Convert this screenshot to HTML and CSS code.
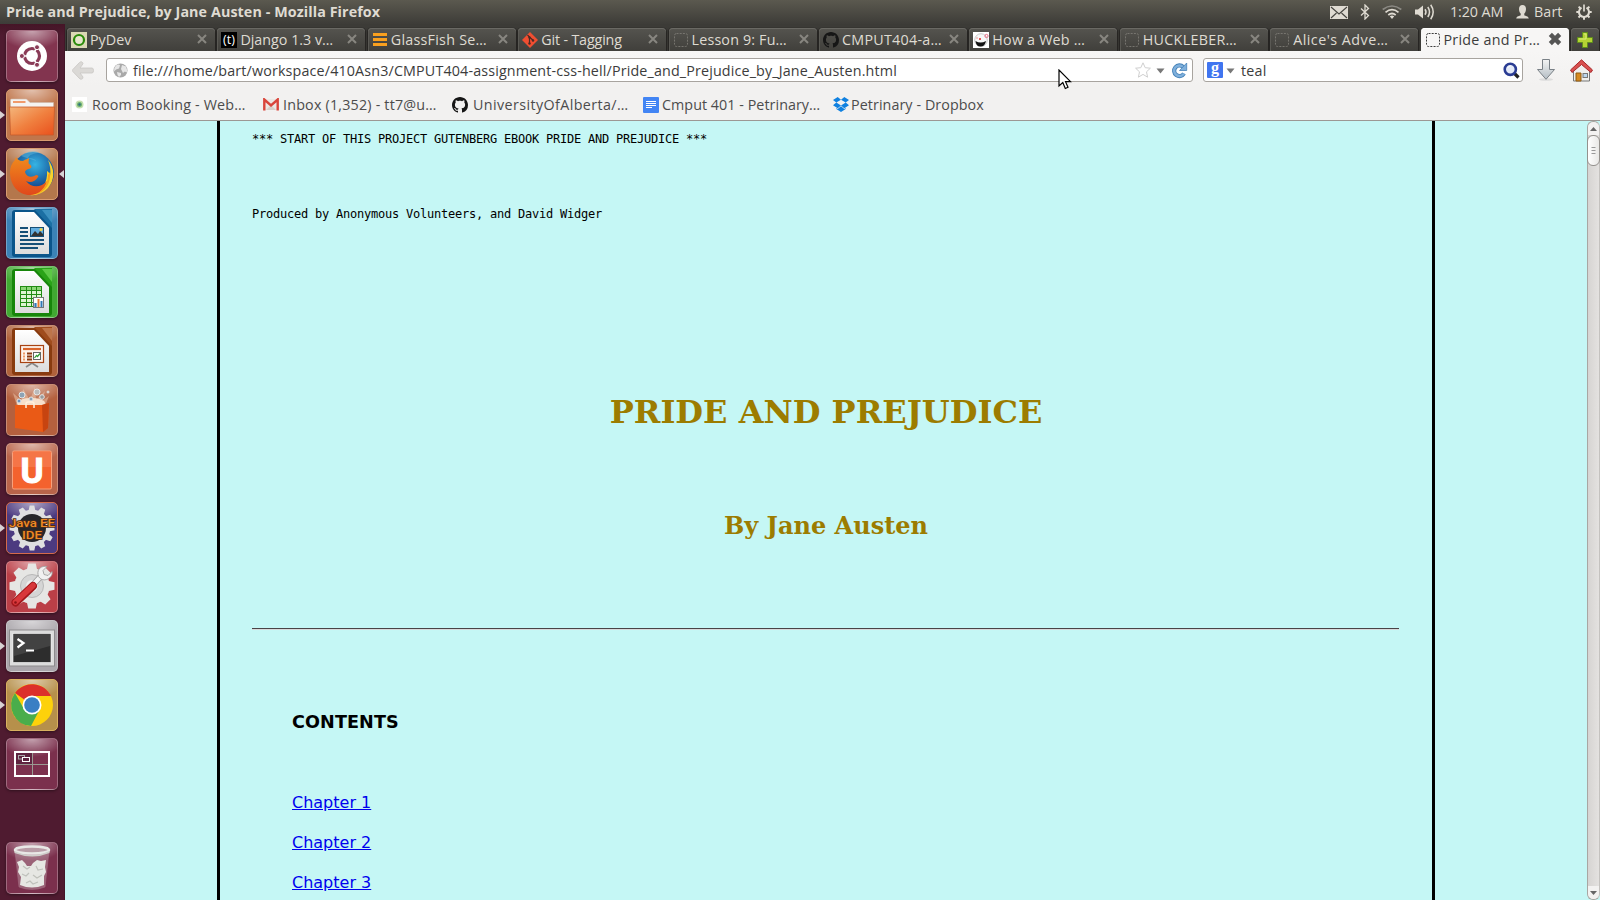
FILE: index.html
```html
<!DOCTYPE html>
<html lang="en">
<head>
<meta charset="utf-8">
<title>Pride and Prejudice, by Jane Austen</title>
<link rel="stylesheet" href="styles.css">
</head>
<body>
<svg class="defs" width="0" height="0">
  <defs>
    <linearGradient id="folder" x1="0" y1="0" x2="1" y2="1"><stop offset="0" stop-color="#f4b67c"/><stop offset=".5" stop-color="#f0803f"/><stop offset="1" stop-color="#e9501c"/></linearGradient>
    <radialGradient id="globe" cx=".55" cy=".3" r=".6"><stop offset="0" stop-color="#35b4e4"/><stop offset="1" stop-color="#123f86"/></radialGradient>
    <linearGradient id="fox" x1="0" y1="0" x2="0" y2="1"><stop offset="0" stop-color="#f08a1d"/><stop offset="1" stop-color="#e0481b"/></linearGradient>
    <linearGradient id="paper" x1="0" y1="0" x2="0" y2="1"><stop offset="0" stop-color="#fff"/><stop offset="1" stop-color="#dcdcdc"/></linearGradient>
    <linearGradient id="steel" x1="0" y1="0" x2="0" y2="1"><stop offset="0" stop-color="#f4f5f5"/><stop offset="1" stop-color="#b4bdc4"/></linearGradient>
    <symbol id="x" viewBox="0 0 12 12"><path d="M2 2l8 8M10 2l-8 8" stroke="#888680" stroke-width="2"/></symbol>
    <symbol id="blank" viewBox="0 0 16 16"><rect x="1.5" y="1.5" width="13" height="13" rx="2" fill="none" stroke="currentColor" stroke-dasharray="2 1.2"/></symbol>
    <symbol id="octo" viewBox="0 0 16 16"><path fill="currentColor" fill-rule="evenodd" d="M8 0C3.58 0 0 3.58 0 8c0 3.54 2.29 6.53 5.47 7.59.4.07.55-.17.55-.38 0-.19-.01-.82-.01-1.49-2.01.37-2.53-.49-2.69-.94-.09-.23-.48-.94-.82-1.13-.28-.15-.68-.52-.01-.53.63-.01 1.08.58 1.23.82.72 1.21 1.87.87 2.33.66.07-.52.28-.87.51-1.07-1.78-.2-3.64-.89-3.64-3.95 0-.87.31-1.59.82-2.15-.08-.2-.36-1.02.08-2.12 0 0 .67-.21 2.2.82.64-.18 1.32-.27 2-.27s1.36.09 2 .27c1.53-1.04 2.2-.82 2.2-.82.44 1.1.16 1.92.08 2.12.51.56.82 1.27.82 2.15 0 3.07-1.87 3.75-3.65 3.95.29.25.54.73.54 1.48 0 1.07-.01 1.93-.01 2.2 0 .21.15.46.55.38A8.01 8.01 0 0 0 16 8c0-4.42-3.58-8-8-8z"/></symbol>
    <symbol id="down" viewBox="0 0 9 6"><path d="M.5.5h8L4.500 5.500z" fill="#777"/></symbol>
    <symbol id="gear" viewBox="-22 -22 44 44"><g fill="#e6e6e4"><path id="bar" d="M-4.800-16L-3.600-21.500h7.200L4.800-16V16L3.600 21.500h-7.200L-4.800 16z"/><use href="#bar" transform="rotate(45)"/><use href="#bar" transform="rotate(90)"/><use href="#bar" transform="rotate(135)"/><circle r="17"/></g></symbol>
    <symbol id="gear12" viewBox="-22 -22 44 44"><g fill="#dfdfe0"><path id="tooth" d="M-3.200-17L-2.200-21.500h4.400L3.200-17V17L2.200 21.500h-4.400L-3.200 17z"/><use href="#tooth" transform="rotate(30)"/><use href="#tooth" transform="rotate(60)"/><use href="#tooth" transform="rotate(90)"/><use href="#tooth" transform="rotate(120)"/><use href="#tooth" transform="rotate(150)"/><circle r="17.500"/></g></symbol>
  </defs>
</svg>

<header class="panel">
  <h1 class="window-title">Pride and Prejudice, by Jane Austen - Mozilla Firefox</h1>
  <div class="indicators">
    <svg class="i-mail" width="18" height="13" viewBox="0 0 18 13"><rect width="18" height="13" fill="#dfdbd2"/><path d="M1 1l8 7 8-7M1 12l5.500-5M17 12l-5.500-5" fill="none" stroke="#45443f" stroke-width="1.100"/></svg>
    <svg class="i-bt" width="10" height="16" viewBox="0 0 10 16"><path d="M1 4.500l7.500 7L5 15V1l3.500 3.500L1 11.500" fill="none" stroke="#dfdbd2" stroke-width="1.300"/></svg>
    <svg class="i-wifi" width="20" height="14" viewBox="0 0 20 14"><g fill="none" stroke="#dfdbd2" stroke-width="1.700"><path d="M.7 4.500Q10-2.500 19.300 4.500" stroke="#8b8983"/><path d="M3.500 7.300Q10 2 16.500 7.300"/><path d="M6.300 10Q10 7 13.700 10"/></g><path d="M7.800 11.300Q10 9.700 12.200 11.300L10 14z" fill="#dfdbd2"/></svg>
    <svg class="i-vol" width="20" height="16" viewBox="0 0 20 16"><path d="M0 5.500h3L8 1.500v13L3 10.500H0z" fill="#dfdbd2"/><g fill="none" stroke="#dfdbd2" stroke-width="1.500"><path d="M10 5.200q2 2.800 0 5.600"/><path d="M12.800 3q3.400 5 0 10"/><path d="M15.700.8q5 7.200 0 14.400"/></g></svg>
    <span class="clock">1:20 AM</span>
    <svg class="i-user" width="13" height="14" viewBox="0 0 13 14"><path d="M6.500 0C9 0 10 1.700 10 4S9 8 8.300 8.600v1.600c1 .8 4 .8 4.500 3.300H.2C.7 11 3.700 11 4.700 10.200V8.600C4 8 3 6.300 3 4S4 0 6.500 0z" fill="#dfdbd2"/></svg>
    <span class="user">Bart</span>
    <svg class="i-power" width="16" height="16" viewBox="-8 -8 16 16"><g stroke="#dfdbd2" fill="none"><path d="M-2.500-4.300A5 5 0 1 0 2.500-4.300" stroke-width="2"/><path d="M0-7.500V-.5" stroke-width="1.700"/><path d="M5 0h2.700M-5 0h-2.700M0 5v2.700M3.500 3.500l2 2M-3.500 3.500l-2 2M3.700-3.700l1.700-1.700M-3.700-3.700l-1.700-1.700" stroke-width="2"/></g></svg>
  </div>
</header>

<div class="desktop">
<nav class="launcher">
  <div class="tile t-dash"><svg viewBox="0 0 52 52"><circle cx="26" cy="26" r="15" fill="#fff"/><circle cx="26" cy="26" r="7.500" fill="none" stroke="#8a3b57" stroke-width="3.200"/><g stroke="#fff" stroke-width="1.500"><path d="M26 26l-11 0M26 26l5.500-9.500M26 26l5.500 9.500"/></g><circle cx="26" cy="26" r="5.200" fill="#fff"/><g fill="#8a3b57" stroke="#fff"><circle cx="15.900" cy="26" r="2.500"/><circle cx="31" cy="17.200" r="2.500"/><circle cx="31" cy="34.800" r="2.500"/></g></svg></div>
  <div class="tile t-files running"><svg viewBox="0 0 52 52"><path d="M4.500 11q0-1 1-1h15l3.500 3.500h23.500V20h-43z" fill="#f5f3f1" stroke="#cdb8aa" stroke-width=".6"/><path d="M7 12h12.500v2H7z" fill="#f09a6b"/><path d="M3.500 18h45l-1 28H4.500z" fill="url(#folder)" stroke="#c65c2b" stroke-width=".8"/></svg></div>
  <div class="tile t-firefox running focused"><svg viewBox="0 0 52 52"><circle cx="27" cy="25" r="21" fill="url(#globe)"/><path d="M15 8c5-5 14-6 19-3-6 0-11 2-12 5 6 0 8 2 8 3z" fill="#5bb9df" opacity=".5"/><path d="M42 12c7 8 7 20 0 28-5 5-12 8-18 7 12-3 18-13 17-24 2 1 3 3 3 5 1-6 0-11-2-16z" fill="#f8d32c"/><path d="M4 24c0-5 2-9 5-12l1-3c1 2 3 4 7 4 3-2 5-2 6-3 0 3-1 5 0 6 2 1 3 2 2 4-2 1-5 1-6 4 1 5 7 6 11 3 2 0 3 1 2 2-3 5-8 6-12 4 5 7 15 7 21 0-2 9-9 14-17 14C12 47 4 37 4 24z" fill="url(#fox)"/><path d="M44 24c1 10-4 20-15 23 9-5 13-12 13-20z" fill="#f6a21d"/></svg></div>
  <div class="tile t-writer"><svg viewBox="0 0 52 52"><rect x="6" y="3" width="40" height="47" rx="3" fill="#0b558a"/><path d="M28 2h18v19z" fill="#1b6fa3"/><path d="M36 3h10v13z" fill="#3c91c0"/><path d="M9 5h19l15 16v26H9z" fill="url(#paper)"/><path d="M14 21h8M14 25h8M14 29h8M14 33h24M14 37h24M14 41h18" stroke="#164f77" stroke-width="1.800"/><rect x="24.500" y="20.500" width="13" height="9" fill="#63aee0" stroke="#164f77"/><path d="M25 29l4-5 3 3 2-3 3 3v2z" fill="#333"/><circle cx="35" cy="22.500" r="1.500" fill="#f5d443"/></svg></div>
  <div class="tile t-calc"><svg viewBox="0 0 52 52"><rect x="6" y="3" width="40" height="47" rx="3" fill="#17860a"/><path d="M28 2h18v19z" fill="#2aa318"/><path d="M36 3h10v13z" fill="#5cc845"/><path d="M9 5h19l15 16v26H9z" fill="url(#paper)"/><rect x="14.500" y="20.500" width="21" height="20" fill="#dff5d2" stroke="#238c14"/><path d="M15 21h20v4H15z" fill="#8dd777"/><path d="M14 24.500h22M14 28.500h22M14 32.500h22M14 36.500h22M20.500 20v21M25.500 20v21M30.500 20v21" stroke="#238c14"/><rect x="27.500" y="31.500" width="10" height="10" fill="#fff" stroke="#777"/><path d="M29.500 41v-4" stroke="#3179b5" stroke-width="2.200"/><path d="M32.500 41v-8" stroke="#ea7a2c" stroke-width="2"/><path d="M35.500 41v-6" stroke="#3179b5" stroke-width="2"/></svg></div>
  <div class="tile t-impress"><svg viewBox="0 0 52 52"><rect x="6" y="3" width="40" height="47" rx="3" fill="#883b0f"/><path d="M28 2h18v19z" fill="#9f4c1d"/><path d="M36 3h10v13z" fill="#bd754a"/><path d="M9 5h19l15 16v26H9z" fill="url(#paper)"/><path d="M26 36v3M20 42l6-4 6 4" fill="none" stroke="#888" stroke-width="1.800"/><rect x="14.500" y="20.500" width="23" height="17" fill="#fdf3ec" stroke="#a84313" stroke-width="1.200"/><path d="M17 24h18" stroke="#d9642a" stroke-width="2.200"/><path d="M17 28.500h2M17 31.500h2M17 34.500h2" stroke="#ee9a66" stroke-width="1.800"/><path d="M21 28.500h5M21 31.500h5M21 34.500h5" stroke="#8d3a11" stroke-width="1.800"/><rect x="27.500" y="27.500" width="7" height="7" fill="#fff" stroke="#666"/><path d="M28.500 33l2-2.500 1 1 2.500-3" fill="none" stroke="#2f9b34" stroke-width="1.200"/></svg></div>
  <div class="tile t-software"><svg viewBox="0 0 52 52"><path d="M11 22L7 9l9 8 1-12 7 11 5-13 1 13 9-9-3 10 7-5-4 10z" fill="#ffe3c8" opacity=".4"/><ellipse cx="25" cy="19" rx="14" ry="5" fill="#fff1e0" opacity=".8"/><g fill="#8da3b5" stroke="#e4e5e6"><circle cx="16" cy="11" r="3"/><circle cx="25" cy="15" r="2"/><circle cx="31" cy="8" r="3" fill="#bbb"/><circle cx="36" cy="13" r="2.300" fill="#999"/><circle cx="13" cy="17" r="2" fill="#6c94be"/><circle cx="42" cy="8" r="1" fill="#bbb"/></g><path d="M9 21h27l7-2-1 25-5 4-28-4z" fill="#ea5a16"/><path d="M36 21l7-2-1 25-5 4z" fill="#c74410"/><path d="M20 24v-4q0-2 2-2h4q2 0 2 2v4" fill="none" stroke="#fff0dc" stroke-width="1.500"/></svg></div>
  <div class="tile t-one"><svg viewBox="0 0 52 52"><rect x="6.500" y="8" width="39" height="38" rx="1.500" fill="#f4622e" stroke="#f8a07b"/><path d="M7 9h38v15H7z" fill="#fff" opacity=".12"/><text x="26" y="39.500" text-anchor="middle" font-size="35" font-weight="700" font-family="Roboto, sans-serif" fill="#fff" stroke="#fff">U</text></svg></div>
  <div class="tile t-java running"><svg viewBox="0 0 52 52"><use href="#gear12" x="3" y="3" width="46" height="46"/><circle cx="26" cy="26" r="14" fill="#26262a"/><g text-anchor="middle" font-family="Roboto, sans-serif" font-weight="500"><text x="26" y="24.500" font-size="11.500" textLength="46" lengthAdjust="spacingAndGlyphs" class="java">Java EE</text><text x="26" y="37" font-size="11.500" textLength="20" lengthAdjust="spacingAndGlyphs" class="java">IDE</text></g></svg></div>
  <div class="tile t-settings"><svg viewBox="0 0 52 52"><use href="#gear" x="3" y="2" width="46" height="46"/><circle cx="26" cy="25" r="11.500" fill="#d5d5d5" stroke="#b8b8b8"/><circle cx="26" cy="25" r="6" fill="#eee"/><path d="M26 25L36 14" stroke="#999" stroke-width="6"/><path d="M26 25L36 14" stroke="#f2f2f2" stroke-width="4.500"/><path d="M41 5.500c-5-1-10 2-9 8s8 7 12 3c2-2 2.500-4 2-6l-4 4-4-1-1-4z" fill="#f1f1f1" stroke="#999" stroke-width=".8"/><path d="M9.500 41.500L27 25" stroke="#a3171b" stroke-width="8" stroke-linecap="round"/><path d="M9.500 41L27 24.500" stroke="#d8383b" stroke-width="5.500" stroke-linecap="round"/><circle cx="9.500" cy="41.500" r="1.300" fill="#8c1115"/></svg></div>
  <div class="tile t-term running"><svg viewBox="0 0 52 52"><rect x="3.500" y="10" width="45" height="36" fill="#dcdcdc" stroke="#8d8b8d"/><rect x="7" y="13.500" width="38" height="29" fill="#2d2d2d" stroke="#fff" stroke-width=".6"/><path d="M8 14h36v12L8 36z" fill="#fff" opacity=".1"/><path d="M11.500 19l6 4-6 4.500" fill="none" stroke="#fff" stroke-width="2.200"/><path d="M20 30.500h8" stroke="#fff" stroke-width="2"/></svg></div>
  <div class="tile t-chrome running"><svg viewBox="0 0 52 52"><circle cx="26" cy="26" r="21" fill="#fdd10b"/><path d="M26 26L26 17H45A21 21 0 0 0 9 14z" fill="#dc2f2b"/><path d="M9 14A21 21 0 0 0 25 47L34 30 18.500 31z" fill="#4aad4b"/><circle cx="26" cy="26" r="9.500" fill="#fff"/><circle cx="26" cy="26" r="7.800" fill="#3a7fc4"/></svg></div>
  <div class="tile t-work"><svg viewBox="0 0 52 52"><path d="M9 14h17v12H9z" fill="#5f2440"/><path d="M26.500 14v24M9 26.500h34" stroke="#9a9a92"/><rect x="9" y="14" width="34" height="24" fill="none" stroke="#fff" stroke-width="2"/><rect x="12.500" y="17.500" width="6" height="3.500" fill="none" stroke="#aaa"/><rect x="16.500" y="19.500" width="7" height="4" fill="#5f2440" stroke="#fff"/></svg></div>
  <div class="tile t-trash"><svg viewBox="0 0 52 52"><path d="M9 9h34l-4 36q-13 5-26 0z" fill="#c9aeb6" opacity=".4" stroke="#d9c5cb" stroke-width=".6"/><path d="M11 20l5-2 3 3 2 3 4 0 2-3 4-3 4 1 5-1-1 7 1 5-2 4v9q-12 5-24 0l1-8-3-5 1-5z" fill="#e6e7e3"/><path d="M17 24l4 3 3-2M30 24l2 4 5-1M16 32l4 2 3-3M27 33l4 3 5-3M20 41l4-2 3 3 5-2" fill="none" stroke="#bfc1bb" stroke-width="1.200"/><ellipse cx="26" cy="8" rx="17" ry="3.500" fill="#b99da7" stroke="#e8e8e6" stroke-width="2.500"/><path d="M8.500 9q17 8 35 0v2q-17 7-35 0z" fill="#cfcfcb"/></svg></div>
</nav>

<main class="browser">
  <div class="tabs">
    <div class="tab"><svg class="fav" viewBox="0 0 16 16"><path fill="#dcd8b4" d="M0 0h16v16H0z"/><circle cx="8" cy="8" r="5" fill="#e8e5cc" stroke="#2b8a09" stroke-width="2.200"/></svg><span class="label k1">PyDev</span><svg class="close"><use href="#x"/></svg></div>
    <div class="tab"><svg class="fav" viewBox="0 0 16 16"><path d="M0 0h16v16H0z"/><text x="8" y="12" text-anchor="middle" font-size="12.500" font-family="Open Sans, sans-serif" fill="#fff">(t)</text></svg><span class="label k2">Django 1.3 v…</span><svg class="close"><use href="#x"/></svg></div>
    <div class="tab"><svg class="fav" viewBox="0 0 16 16"><path d="M1 1h14v3H1zM1 6h14v3H1zM1 11h14v3H1z" fill="#f9a01f"/></svg><span class="label k3">GlassFish Se…</span><svg class="close"><use href="#x"/></svg></div>
    <div class="tab"><svg class="fav" viewBox="0 0 16 16"><path d="M8 0l8 8-8 8-8-8z" fill="#f04e31"/><path d="M5.500 3l2 2v6.500M8 5.500l3 2.800" stroke="#4a2a24" stroke-width="1.200" fill="none"/><circle cx="7.500" cy="5.500" r="1.200" fill="#4a2a24"/><circle cx="7.500" cy="11.500" r="1.200" fill="#4a2a24"/><circle cx="11" cy="8.500" r="1.200" fill="#4a2a24"/></svg><span class="label k4">Git - Tagging</span><svg class="close"><use href="#x"/></svg></div>
    <div class="tab"><svg class="fav dim"><use href="#blank"/></svg><span class="label k5">Lesson 9: Fu…</span><svg class="close"><use href="#x"/></svg></div>
    <div class="tab"><svg class="fav black"><use href="#octo"/></svg><span class="label k6">CMPUT404-a…</span><svg class="close"><use href="#x"/></svg></div>
    <div class="tab"><svg class="fav" viewBox="0 0 16 16"><path fill="#fff" d="M0 0h16v16H0z"/><circle cx="8" cy="8" r="6.300" fill="#f8f8f8" stroke="#bbb" stroke-width=".8"/><path d="M2.500 9q5 3 10.500 0-1 5.500-5.500 5.500T2.500 9z" fill="#111"/><circle cx="7" cy="7" r="1" fill="#d22"/><circle cx="13.500" cy="4" r="1.600" fill="none" stroke="#e66a82"/><circle cx="4" cy="6" r=".8" fill="#e88"/></svg><span class="label k7">How a Web …</span><svg class="close"><use href="#x"/></svg></div>
    <div class="tab"><svg class="fav dim"><use href="#blank"/></svg><span class="label k8">HUCKLEBER…</span><svg class="close"><use href="#x"/></svg></div>
    <div class="tab"><svg class="fav dim"><use href="#blank"/></svg><span class="label k9">Alice's Adve…</span><svg class="close"><use href="#x"/></svg></div>
    <div class="tab active"><svg class="fav"><use href="#blank"/></svg><span class="label k10">Pride and Pr…</span><svg class="close" viewBox="0 0 12 12"><path d="M2 2l8 8M10 2l-8 8" stroke="#555" stroke-width="3.800"/></svg></div>
    <div class="tab new"><svg width="16" height="16" viewBox="0 0 16 16"><path d="M5.500.5h5v5h5v5h-5v5h-5v-5h-5v-5h5z" fill="#b5d334" stroke="#5f8f1c"/><path d="M7 2h2v5H2" fill="none" stroke="#d9ec7c"/></svg></div>
  </div>

  <div class="toolbar">
    <svg class="back" width="22" height="19" viewBox="0 0 22 19"><path d="M9.500.8q1.500.5 1.500 2L8 7h12q1.500 0 1.500 2.500T20 12H8l3 4q0 2-1.500 2.200Q8 18.500 7 17L.8 10.500q-.6-1 0-2L7.500 1.500Q8.500.5 9.500.8z" fill="#dbd9d6" stroke="#c9c7c4" stroke-width=".8"/></svg>
    <div class="field url">
      <svg width="15" height="15" viewBox="0 0 15 15"><circle cx="7.500" cy="7.500" r="7" fill="#a9a9a9"/><path d="M3 2.500q3-2 4 0l-1 3-3 1-2 2Q.5 5 3 2.500zM9 2l4 1.500q1.500 3 .8 6l-2-1L10 10 8 6zM4 9l4 1v2l-2 2q-2-2-2-5z" fill="#e6e6e6"/></svg>
      <span class="address">file:///home/bart/workspace/410Asn3/CMPUT404-assignment-css-hell/Pride_and_Prejudice_by_Jane_Austen.html</span>
      <svg class="star" width="16" height="16" viewBox="0 0 16 16"><path d="M8 .8l2.200 4.900 5.200.5-3.900 3.600 1.100 5.400L8 12.400l-4.600 2.800 1.100-5.400L.6 6.200l5.200-.5z" fill="#fff" stroke="#cfcfcf"/></svg>
      <svg class="drop" width="9" height="6"><use href="#down"/></svg>
      <svg class="reload" width="17" height="17" viewBox="0 0 17 17"><path d="M12.200 5A5.300 5.300 0 1 0 13 11.500" fill="none" stroke="#4682b8" stroke-width="4.200"/><path d="M12.200 5A5.300 5.300 0 1 0 13 11.500" fill="none" stroke="#7fb0dc" stroke-width="2.400"/><path d="M15.700 1v7.500H8.500z" fill="#7fb0dc" stroke="#4682b8" stroke-width=".8"/></svg>
    </div>
    <div class="field search">
      <span class="engine">g</span>
      <svg class="drop2" width="9" height="6"><use href="#down"/></svg>
      <span class="query">teal</span>
      <svg class="lens" width="17" height="17" viewBox="0 0 17 17"><path d="M11 11l4.500 4.500" stroke="#222" stroke-width="3.200"/><circle cx="7.300" cy="7.300" r="5.600" fill="#e4eaf8" stroke="#2a3c93" stroke-width="2.600"/><path d="M4.500 6q1-2 3-2" stroke="#fff" fill="none"/></svg>
    </div>
    <svg class="dl" width="18" height="22" viewBox="0 0 18 22"><ellipse cx="9" cy="20.500" rx="7" ry="1.300" fill="#ddd"/><path d="M5.500.5h7v10h5L9 20.300.5 10.500h5z" fill="url(#steel)" stroke="#7a8187"/></svg>
    <svg class="home" width="23" height="23" viewBox="0 0 23 23"><path d="M3.500 10L11.500 4l8 6v12h-16z" fill="#f0efed" stroke="#777"/><path d="M6 14h5v8H6z" fill="#d58a20" stroke="#8f5a12"/><rect x="13" y="14.500" width="4.500" height="4" fill="#bcd6ec" stroke="#777"/><path d="M11.500.8L22.500 11l-1.500 2.500-9.500-8-9.500 8L.5 11z" fill="#d9504f" stroke="#a82a2c"/></svg>
  </div>

  <div class="bookmarks">
    <a class="bm"><svg width="15" height="15" viewBox="0 0 15 15"><path fill="#fff" d="M0 0h15v15H0z"/><circle cx="7.500" cy="7.500" r="4" fill="#c5dfae"/><circle cx="7.500" cy="7.500" r="2.500" fill="#6db06d"/><circle cx="7.500" cy="7.500" r="1.200" fill="#2f6c86"/></svg><span class="b1">Room Booking - Web…</span></a>
    <a class="bm"><svg width="16" height="13" viewBox="0 0 16 13"><path d="M1 1h14v11H1z" fill="#ece8e4"/><path d="M3 12l5-5 5 5z" fill="#d6d0ca"/><path d="M1.300 12.500V1.500L8 7.500l6.700-6v11" fill="none" stroke="#d9453b" stroke-width="2.400"/></svg><span class="b2">Inbox (1,352) - tt7@u…</span></a>
    <a class="bm"><svg class="black" width="16" height="16"><use href="#octo"/></svg><span class="b3">UniversityOfAlberta/…</span></a>
    <a class="bm"><svg width="16" height="16" viewBox="0 0 16 16"><rect width="16" height="16" rx="1" fill="#4285f4"/><path d="M3 4.500h10M3 6.500h10M3 8.500h10M3 10.500h6" stroke="#fff"/></svg><span class="b4">Cmput 401 - Petrinary…</span></a>
    <a class="bm"><svg width="16" height="15" viewBox="0 0 16 15"><path d="M4.700 0L8 2.700 3.300 5.600 0 3zM11.300 0L16 3l-3.300 2.600L8 2.700zM0 8.300l3.300-2.700L8 8.500l-3.300 2.700zM16 8.300l-3.300-2.700L8 8.500l3.300 2.700zM8 9.200l3.300 2.800 1.400-.9v1L8 15l-4.700-2.900v-1l1.400.9z" fill="#1081e0"/></svg><span class="b5">Petrinary - Dropbox</span></a>
  </div>

  <div class="viewport">
    <article class="book">
      <pre>*** START OF THIS PROJECT GUTENBERG EBOOK PRIDE AND PREJUDICE ***




Produced by Anonymous Volunteers, and David Widger</pre>
      <h1>PRIDE AND PREJUDICE</h1>
      <h2>By Jane Austen</h2>
      <hr>
      <section class="toc">
        <h3>CONTENTS</h3>
        <p><a href="#c1">Chapter 1</a></p>
        <p><a href="#c2">Chapter 2</a></p>
        <p><a href="#c3">Chapter 3</a></p>
      </section>
    </article>
    <div class="scrollbar">
      <div class="step"><svg width="7" height="4" viewBox="0 0 7 4"><path d="M3.500 0L7 4H0z" fill="#666"/></svg></div>
      <div class="thumb"><svg width="5" height="8" viewBox="0 0 5 8"><path d="M.5.500h4M.5 3.500h4M.5 6.500h4" stroke="#999"/></svg></div>
      <div class="step end"><svg width="7" height="4" viewBox="0 0 7 4"><path d="M3.500 4L0 0h7z" fill="#666"/></svg></div>
    </div>
  </div>
</main>
</div>
<svg class="cursor" width="14" height="21" viewBox="0 0 14 21"><path d="M1 1v16l3.800-3.500 2.500 6 2.700-1.200-2.500-5.600H12.500z" fill="#fff" stroke="#000" stroke-width="1.200"/></svg>
</body>
</html>
```
FILE: styles.css
```css
* { box-sizing: border-box; }
body {
  margin: 0;
  width: 1600px;
  height: 900px;
  overflow: hidden;
  display: flex;
  flex-direction: column;
  font: 14.3px "Open Sans", "Noto Sans", sans-serif;
  color: #3c3c3c;
}
.defs { position: absolute; }
svg { flex: none; display: block; }
span { white-space: nowrap; }

/* top panel */
.panel {
  flex: none;
  height: 24px;
  display: flex;
  align-items: center;
  justify-content: space-between;
  padding: 0 8px 0 6px;
  background: linear-gradient(#5b594f, #3d3c38);
  color: #dfdbd2;
}
.window-title { margin: 0; font-size: 14.3px; font-weight: 700; line-height: 24px; white-space: nowrap; letter-spacing: .09px; }
.indicators { display: flex; align-items: center; line-height: 24px; }
.i-bt { margin-left: 12px; }
.i-wifi { margin-left: 12px; }
.i-vol { margin-left: 13px; }
.clock { margin-left: 15px; width: 54px; letter-spacing: -.1px; }
.i-user { margin-left: 12px; }
.user { margin-left: 5px; width: 29px; letter-spacing: .1px; }
.i-power { margin-left: 13px; }

/* launcher */
.desktop { flex: 1; min-height: 0; display: flex; }
.launcher {
  flex: none;
  width: 65px;
  display: flex;
  flex-direction: column;
  gap: 7px;
  padding: 6px 0 6px 6px;
  background: linear-gradient(#451527, #4f1b30 12px);
  box-shadow: inset -1px 0 #431628;
}
.tile {
  position: relative;
  width: 52px;
  height: 52px;
  border-radius: 5px;
  border: 1px solid rgba(255,255,255,.28);
  background: radial-gradient(ellipse 32px 18px at 50% 0, rgba(255,255,255,.55), rgba(255,255,255,0)), var(--c);
  box-shadow: 0 1px 3px rgba(0,0,0,.4);
}
.tile svg { width: 52px; height: 52px; margin: -1px; }
.t-dash { --c: #82344f; }
.t-files { --c: #c0764c; border-color: #d99b70; }
.t-firefox { --c: #b4774c; border-color: #d99b70; }
.t-writer { --c: #3b82b6; }
.t-calc { --c: #41a932; }
.t-impress { --c: #b0623b; }
.t-software { --c: #b4603e; }
.t-one { --c: #b8644a; }
.t-java { --c: #4c3a80; border-color: #d56a4c; }
.t-settings { --c: #bb3f47; }
.t-term { --c: #aaa6ab; }
.t-chrome { --c: #b6904b; border-color: #d9b160; }
.t-work, .t-trash { --c: #7b304d; }
.t-trash { margin-top: auto; }
.java { fill: #f08a24; stroke: #4a2a18; stroke-width: 1.6px; paint-order: stroke; }
.running::before, .focused::after {
  content: "";
  position: absolute;
  top: 21px;
  left: -7px;
  border: solid transparent;
  border-width: 4px 0 4px 5px;
  border-left-color: #d8d2d4;
}
.focused::after { left: 52px; border-width: 4px 5px 4px 0; border-right-color: #d8d2d4; }

/* tabs */
.browser { flex: 1; min-width: 0; display: flex; flex-direction: column; }
.tabs {
  flex: none;
  height: 27px;
  display: flex;
  gap: 2.400px;
  padding: 4px 1px 0 2px;
  background: #3c3b37;
}
.tab {
  width: 148px;
  height: 23px;
  display: flex;
  align-items: center;
  padding: 0 6px 0 4px;
  border-radius: 4px 4px 0 0;
  background: linear-gradient(#55544f, #403f3b);
  box-shadow: inset 0 1px #6a6964, inset 1px 0 #5a5954, -1px 0 1px #252422, 1px 0 1px #252422;
  color: #dfdbd2;
}
.fav { width: 16px; height: 16px; }
.label { margin-left: 3px; flex: 1; line-height: 22px; overflow: hidden; }
.k3 { letter-spacing: .25px; }
.k4 { letter-spacing: -.15px; }
.k5 { letter-spacing: .17px; }
.k6 { letter-spacing: .28px; }
.k7 { letter-spacing: .2px; }
.k8 { letter-spacing: .3px; }
.k9 { letter-spacing: .48px; }
.k10 { letter-spacing: .25px; }
.close { width: 12px; height: 12px; margin-right: 1px; margin-bottom: 1px; }
.dim { color: #77756f; }
.black { color: #161616; }
.tab.active { background: #f7f6f5; color: #3c3c3c; box-shadow: inset 0 1px #fff; }
.active .close { width: 14px; height: 14px; }
.tab.new { width: 28px; padding: 0; justify-content: center; }

/* navigation toolbar */
.toolbar {
  flex: none;
  height: 35px;
  display: flex;
  align-items: center;
  padding: 3px 7px 0 7px;
  background: linear-gradient(#f7f6f5, #f2f1f0);
}
.field {
  height: 24px;
  display: flex;
  align-items: center;
  background: #fff;
  border: 1px solid #a8a49f;
  border-radius: 3px;
  line-height: 22px;
}
.url { width: 1087px; margin-left: 12px; padding: 0 4px 0 6px; }
.address { margin: 1px 0 0 5px; flex: 1; letter-spacing: .15px; }
.drop { margin: 2px 6px 0 5px; }
.search { width: 320px; margin-left: 10px; padding: 0 2px 0 3px; }
.engine {
  width: 16px;
  height: 16px;
  border-radius: 1px;
  background: #4075f0;
  color: #fff;
  font: 700 16px/12px "Liberation Serif", serif;
  text-align: center;
}
.drop2 { margin: 2px 6px 0 3px; }
.query { margin-top: 1px; flex: 1; letter-spacing: .2px; }
.dl { margin-left: 14px; }
.home { margin-left: 15px; }

/* bookmarks */
.bookmarks {
  flex: none;
  height: 35px;
  display: flex;
  align-items: center;
  padding: 3px 0 0 7px;
  background: #f2f1f0;
  border-bottom: 1px solid #9c9894;
  color: #4c4c4c;
}
.bm { display: flex; align-items: center; gap: 5px; }
.b1 { width: 171px; letter-spacing: .17px; }
.b2 { width: 169px; letter-spacing: .2px; }
.b3 { width: 170px; letter-spacing: .4px; }
.b4 { width: 171px; letter-spacing: .05px; }
.b2 { margin-left: -1px; }
.b4 { margin-left: -2px; }
.b5 { margin-left: -3px; letter-spacing: .08px; }

/* page */
.viewport { flex: 1; min-height: 0; display: flex; background: #c5f7f5; overflow: hidden; }
.book {
  width: 1218px;
  margin-left: 152px;
  padding: 0 33px 0 32px;
  border: solid #000;
  border-width: 0 3px;
  color: #000;
  font: 16px "DejaVu Sans", sans-serif;
}
.book pre {
  margin: 11px 0 0;
  font: 12px/15px "DejaVu Sans Mono", monospace;
  letter-spacing: -.224px;
}
.book h1, .book h2 { font-family: "DejaVu Serif", serif; color: #9c7c00; text-align: center; font-weight: 700; padding-left: 1px; }
.book h1 { margin: 171px 0 0; font-size: 32px; line-height: 38px; }
.book h2 { margin: 81px 0 0; font-size: 24px; line-height: 28px; }
.book hr { margin: 88px 0 0; height: 2px; border: 0; border-top: 1px solid #4a4446; background: #d8dada; }
.toc { padding: 81px 40px 0; }
.toc h3 { margin: 0; font-size: 17.600px; line-height: 22px; letter-spacing: .1px; }
.toc p { margin: 0 0 21px; line-height: 19px; }
.toc h3 + p { margin-top: 60px; }
.toc a { color: #00e; }

.scrollbar {
  margin-left: auto;
  width: 13px;
  display: flex;
  flex-direction: column;
  background: linear-gradient(90deg, #d6d4d2, #e4e2e0);
  border: 1px solid #a9a6a2;
  border-right-color: #c4c2bf;
  border-radius: 6px;
}
.step { height: 13px; display: flex; align-items: center; justify-content: center; background: #f3f2f1; border-radius: 6px 6px 0 0; }
.step.end { margin-top: auto; border-radius: 0 0 6px 6px; }
.thumb { height: 31px; margin: 0 -1px; display: flex; align-items: center; justify-content: center; background: linear-gradient(90deg, #fff, #e9e8e6); border: 1px solid #94918d; border-radius: 6px; }

.cursor { position: absolute; left: 1058px; top: 69px; }
```
